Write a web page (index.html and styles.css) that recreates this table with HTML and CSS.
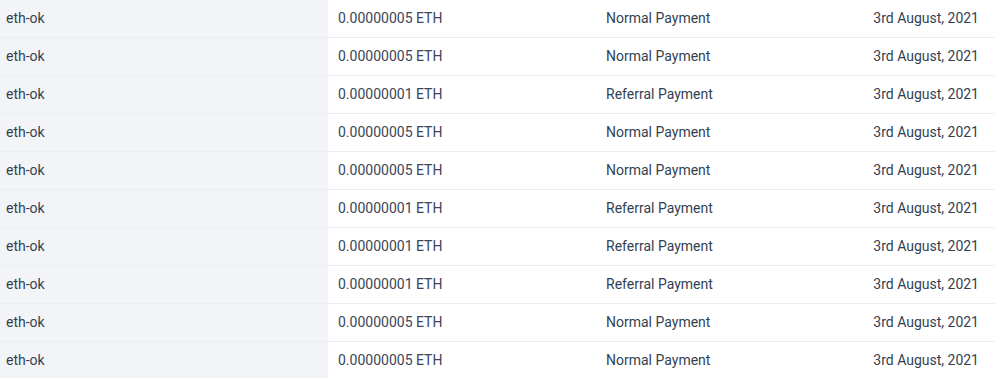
FILE: index.html
```html
<!DOCTYPE html>
<html>
<head>
<meta charset="utf-8">
<link rel="stylesheet" href="styles.css">
</head>
<body>
<table class="tx">
  <colgroup><col class="c-name"><col class="c-amt"><col class="c-type"><col class="c-date"></colgroup>
  <tbody>
    <tr><td class="name">eth-ok</td><td class="amt">0.00000005 ETH</td><td class="type">Normal Payment</td><td class="date">3rd August, 2021</td></tr>
    <tr><td class="name">eth-ok</td><td class="amt">0.00000005 ETH</td><td class="type">Normal Payment</td><td class="date">3rd August, 2021</td></tr>
    <tr><td class="name">eth-ok</td><td class="amt">0.00000001 ETH</td><td class="type">Referral Payment</td><td class="date">3rd August, 2021</td></tr>
    <tr><td class="name">eth-ok</td><td class="amt">0.00000005 ETH</td><td class="type">Normal Payment</td><td class="date">3rd August, 2021</td></tr>
    <tr><td class="name">eth-ok</td><td class="amt">0.00000005 ETH</td><td class="type">Normal Payment</td><td class="date">3rd August, 2021</td></tr>
    <tr><td class="name">eth-ok</td><td class="amt">0.00000001 ETH</td><td class="type">Referral Payment</td><td class="date">3rd August, 2021</td></tr>
    <tr><td class="name">eth-ok</td><td class="amt">0.00000001 ETH</td><td class="type">Referral Payment</td><td class="date">3rd August, 2021</td></tr>
    <tr><td class="name">eth-ok</td><td class="amt">0.00000001 ETH</td><td class="type">Referral Payment</td><td class="date">3rd August, 2021</td></tr>
    <tr><td class="name">eth-ok</td><td class="amt">0.00000005 ETH</td><td class="type">Normal Payment</td><td class="date">3rd August, 2021</td></tr>
    <tr><td class="name">eth-ok</td><td class="amt">0.00000005 ETH</td><td class="type">Normal Payment</td><td class="date">3rd August, 2021</td></tr>
  </tbody>
</table>
</body>
</html>
```
FILE: styles.css
```css
html, body {
  margin: 0;
  padding: 0;
  background: #ffffff;
}
body {
  font-family: Roboto, "Liberation Sans", sans-serif;
  font-size: 14px;
  color: #333f52;
}
.tx {
  width: 100%;
  border-collapse: collapse;
  table-layout: fixed;
}
.c-name { width: 328px; }
.c-amt { width: 268px; }
.c-type { width: 240px; }
.tx td {
  height: 35px;
  padding: 0 0 2px 0;
  border-bottom: 1px solid #e9eef6;
  vertical-align: middle;
  white-space: nowrap;
  line-height: 16px;
}
.tx td.name {
  background: #f3f4f8;
  padding-left: 6px;
}
.tx td.amt {
  padding-left: 10px;
  color: #3a4659;
}
.tx td.type {
  padding-left: 10px;
}
.tx td.date {
  text-align: right;
  padding-right: 16px;
}
```
